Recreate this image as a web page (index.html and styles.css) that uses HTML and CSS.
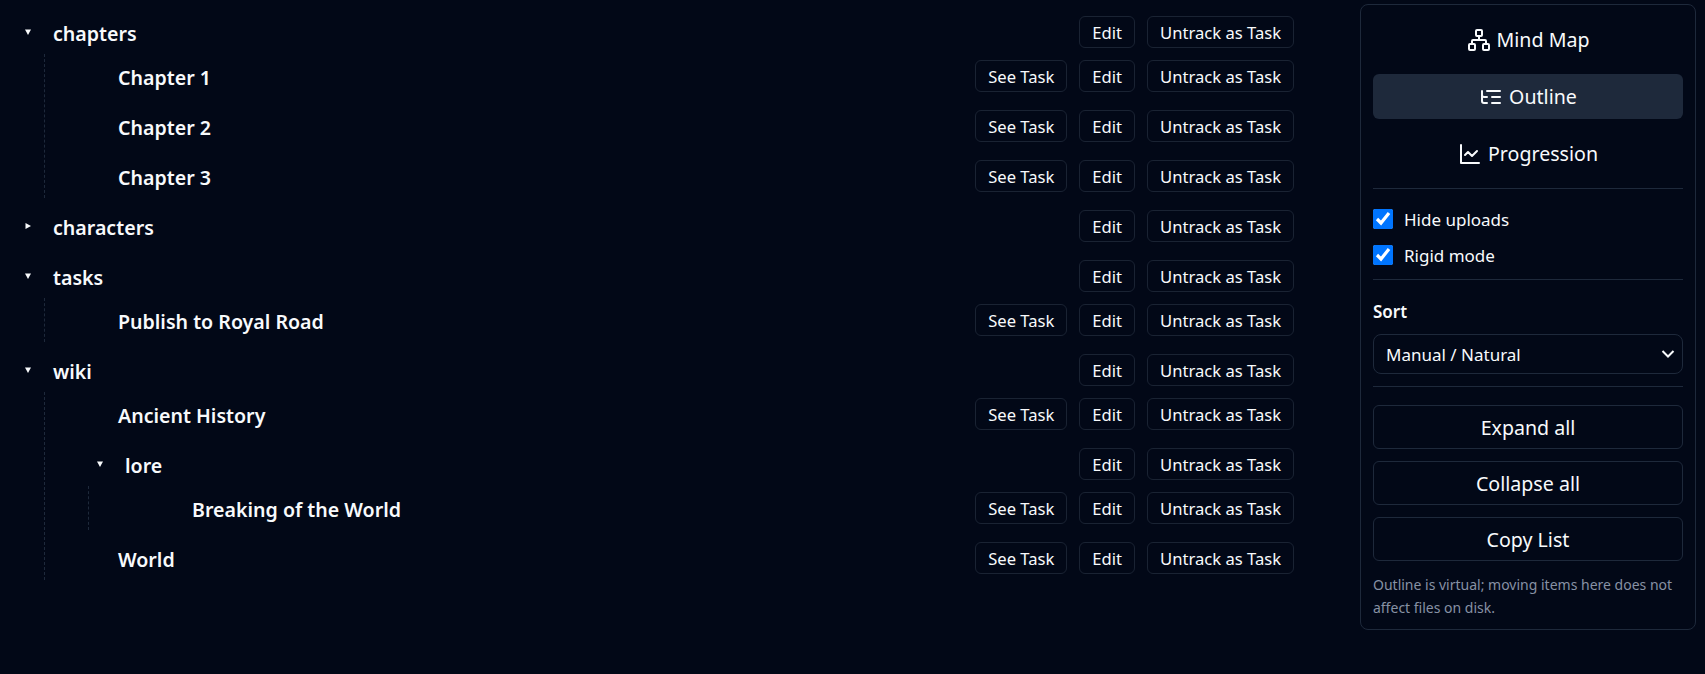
FILE: index.html
```html
<!DOCTYPE html>
<html lang="en">
<head>
  <meta charset="UTF-8" />
  <title>Outline</title>
  <link rel="stylesheet" href="styles.css">
</head>
<body>
  <main class="outline">
    <ul class="tree tree-root">
      <li>
        <div class="row">
          <button class="caret"><svg viewBox="0 0 6 6"><path d="M0 .5h6L3 6z"/></svg></button>
          <span class="name">chapters</span>
          <div class="actions"><button>Edit</button><button>Untrack as Task</button></div>
        </div>
        <ul class="tree tree-sub">
          <li><div class="row leaf"><span class="name">Chapter 1</span><div class="actions"><button>See Task</button><button>Edit</button><button>Untrack as Task</button></div></div></li>
          <li><div class="row leaf"><span class="name">Chapter 2</span><div class="actions"><button>See Task</button><button>Edit</button><button>Untrack as Task</button></div></div></li>
          <li><div class="row leaf"><span class="name">Chapter 3</span><div class="actions"><button>See Task</button><button>Edit</button><button>Untrack as Task</button></div></div></li>
        </ul>
      </li>
      <li>
        <div class="row">
          <button class="caret"><svg viewBox="0 0 6 6"><path d="M.5 0v6L6 3z"/></svg></button>
          <span class="name">characters</span>
          <div class="actions"><button>Edit</button><button>Untrack as Task</button></div>
        </div>
      </li>
      <li>
        <div class="row">
          <button class="caret"><svg viewBox="0 0 6 6"><path d="M0 .5h6L3 6z"/></svg></button>
          <span class="name">tasks</span>
          <div class="actions"><button>Edit</button><button>Untrack as Task</button></div>
        </div>
        <ul class="tree tree-sub">
          <li><div class="row leaf"><span class="name">Publish to Royal Road</span><div class="actions"><button>See Task</button><button>Edit</button><button>Untrack as Task</button></div></div></li>
        </ul>
      </li>
      <li>
        <div class="row">
          <button class="caret"><svg viewBox="0 0 6 6"><path d="M0 .5h6L3 6z"/></svg></button>
          <span class="name">wiki</span>
          <div class="actions"><button>Edit</button><button>Untrack as Task</button></div>
        </div>
        <ul class="tree tree-sub">
          <li><div class="row leaf"><span class="name">Ancient History</span><div class="actions"><button>See Task</button><button>Edit</button><button>Untrack as Task</button></div></div></li>
          <li>
            <div class="row nested">
              <button class="caret"><svg viewBox="0 0 6 6"><path d="M0 .5h6L3 6z"/></svg></button>
              <span class="name">lore</span>
              <div class="actions"><button>Edit</button><button>Untrack as Task</button></div>
            </div>
            <ul class="tree tree-sub tree-deep">
              <li><div class="row leaf"><span class="name">Breaking of the World</span><div class="actions"><button>See Task</button><button>Edit</button><button>Untrack as Task</button></div></div></li>
            </ul>
          </li>
          <li><div class="row leaf"><span class="name">World</span><div class="actions"><button>See Task</button><button>Edit</button><button>Untrack as Task</button></div></div></li>
        </ul>
      </li>
    </ul>
  </main>

  <aside class="panel">
    <div class="views">
      <button class="view">
        <svg class="icon" viewBox="0 0 24 24"><rect x="16" y="16" width="6" height="6" rx="1"/><rect x="2" y="16" width="6" height="6" rx="1"/><rect x="9" y="2" width="6" height="6" rx="1"/><path d="M5 16v-3a1 1 0 0 1 1-1h12a1 1 0 0 1 1 1v3"/><path d="M12 12V8"/></svg>
        Mind Map
      </button>
      <button class="view active">
        <svg class="icon" viewBox="0 0 24 24"><path d="M21 12h-8"/><path d="M21 6H8"/><path d="M21 18h-8"/><path d="M3 6v4c0 1.1.9 2 2 2h3"/><path d="M3 10v6c0 1.1.9 2 2 2h3"/></svg>
        Outline
      </button>
      <button class="view">
        <svg class="icon" viewBox="0 0 24 24"><path d="M3 3v18h18"/><path d="m19 9-5 5-4-4-3 3"/></svg>
        Progression
      </button>
    </div>
    <hr>
    <label class="check"><input type="checkbox" checked> Hide uploads</label>
    <label class="check"><input type="checkbox" checked> Rigid mode</label>
    <hr class="hr-tight">
    <div class="sort-label">Sort</div>
    <div class="select">
      <span>Manual / Natural</span>
      <svg viewBox="0 0 16 16"><path d="M2.5 5l5.5 5.5L13.5 5"/></svg>
    </div>
    <hr>
    <div class="tools">
      <button>Expand all</button>
      <button>Collapse all</button>
      <button>Copy List</button>
    </div>
    <p class="note">Outline is virtual; moving items here does not affect files on disk.</p>
  </aside>
</body>
</html>
```

FILE: styles.css
```css
* {
  box-sizing: border-box;
}

html, body {
  height: 100%;
}

body {
  margin: 0;
  background-color: #020817;
  color: #f8fafc;
  font-family: 'Noto Sans', sans-serif;
  display: flex;
  align-items: flex-start;
  overflow: hidden;
}

button {
  font-family: inherit;
  color: inherit;
  background: none;
  border: 1px solid #1e293b;
  border-radius: 6px;
  cursor: pointer;
}

ul {
  list-style: none;
  margin: 0;
  padding: 0;
}

.outline {
  width: 1294px;
  padding-top: 16px;
  flex: none;
}

.tree li {
  display: flow-root;
}

.tree li + li {
  margin-top: 12px;
}

.tree-root {
  padding-left: 19px;
}

.tree-sub {
  margin-left: 25px;
  padding-top: 6px;
  border-left: 1px dashed #1e293b;
}

.tree-deep {
  margin-left: 43px;
}

.row {
  display: flex;
  align-items: center;
  height: 32px;
  margin-bottom: 6px;
}

.leaf {
  padding-left: 73px;
}

.tree-deep .leaf {
  padding-left: 103px;
}

.nested {
  padding-left: 46px;
}

.caret {
  width: 17px;
  height: 17px;
  padding: 0;
  margin-right: 17px;
  border: none;
  display: flex;
  align-items: center;
  justify-content: center;
}

.caret svg {
  width: 6px;
  height: 6px;
  fill: #f8fafc;
}

.name {
  font-size: 19.6px;
  font-weight: 600;
  padding-top: 2px;
}

.actions {
  margin-left: auto;
  display: flex;
  gap: 12px;
}

.actions button {
  height: 32px;
  padding: 0 12px;
  font-size: 16.6px;
  border-color: #1a2333;
}

.panel {
  width: 336px;
  height: 626px;
  margin: 4px 0 0 66px;
  padding: 12px;
  flex: none;
  border: 1px solid #1e293b;
  border-radius: 8px;
}

.views {
  display: flex;
  flex-direction: column;
  gap: 12px;
}

.view {
  height: 45px;
  border: none;
  font-size: 19.6px;
  display: flex;
  align-items: center;
  justify-content: center;
  gap: 6px;
}

.view.active {
  background-color: #1e293b;
}

.icon {
  width: 24px;
  height: 24px;
  fill: none;
  stroke: currentColor;
  stroke-width: 2;
  stroke-linecap: round;
  stroke-linejoin: round;
}

hr {
  border: none;
  border-top: 1px solid #1e293b;
  margin: 12px 0;
}

.hr-tight {
  margin-top: 6px;
}

.check {
  display: flex;
  align-items: center;
  gap: 11px;
  height: 36px;
  font-size: 17px;
}

.check input {
  width: 20px;
  height: 20px;
  margin: 0;
  accent-color: #0075ff;
  color-scheme: dark;
}

.sort-label {
  font-size: 17px;
  font-weight: 600;
  margin-top: 20px;
  line-height: 24px;
}

.select {
  height: 40px;
  margin-top: 10px;
  padding: 0 12px;
  border: 1px solid #1e293b;
  border-radius: 8px;
  font-size: 17px;
  display: flex;
  align-items: center;
  justify-content: space-between;
}

.select svg {
  width: 16px;
  height: 16px;
  margin-right: -6px;
  fill: none;
  stroke: #f8fafc;
  stroke-width: 2;
}

.tools {
  display: flex;
  flex-direction: column;
  gap: 12px;
  margin-top: 18px;
}

.tools button {
  height: 44px;
  font-size: 19.6px;
}

.note {
  margin: 12px 0 0;
  font-size: 14px;
  line-height: 23px;
  color: #8791a4;
}
```
